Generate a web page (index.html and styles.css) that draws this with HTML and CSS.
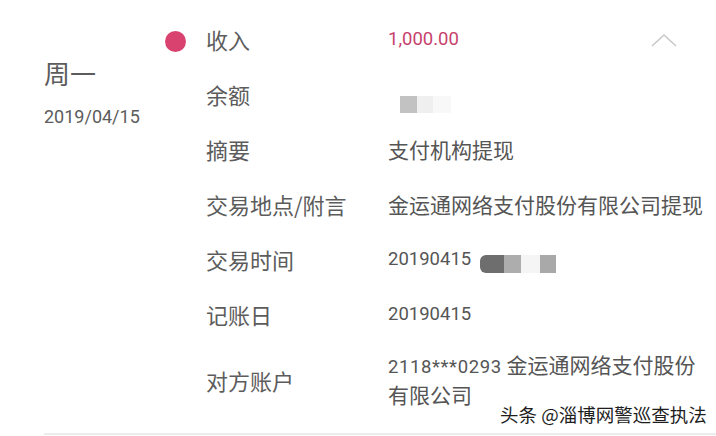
FILE: index.html
```html
<!DOCTYPE html>
<html lang="zh-CN">
<head>
<meta charset="utf-8">
<title>交易明细</title>
<link rel="stylesheet" href="styles.css">
</head>
<body>
<div class="page">
  <div class="entry">
    <div class="day">
      <div class="weekday">周一</div>
      <div class="date">2019/04/15</div>
    </div>
    <div class="details">
      <div class="mark"><span class="dot"></span></div>
      <div class="label">收入</div>
      <div class="value amount"><span class="num">1,000.00</span>
        <svg class="chevron" width="26" height="14" viewBox="0 0 26 14"><polyline points="1,13 13,2 25,13" fill="none" stroke="#c9c9c9" stroke-width="1.6"/></svg>
      </div>

      <div class="mark"></div>
      <div class="label">余额</div>
      <div class="value"><span class="redact r1"><i class="b b-mid"></i><i class="b b-faint"></i><i class="b b-ghost"></i></span></div>

      <div class="mark"></div>
      <div class="label">摘要</div>
      <div class="value">支付机构提现</div>

      <div class="mark"></div>
      <div class="label">交易地点/附言</div>
      <div class="value">金运通网络支付股份有限公司提现</div>

      <div class="mark"></div>
      <div class="label">交易时间</div>
      <div class="value"><span class="num">20190415</span><span class="redact r2"><i class="c c-dark"></i><i class="c c-mid"></i><i class="c c-faint"></i><i class="c c-mid2"></i></span></div>

      <div class="mark"></div>
      <div class="label">记账日</div>
      <div class="value"><span class="num">20190415</span></div>

      <div class="mark tall"></div>
      <div class="label tall">对方账户</div>
      <div class="value multi"><span class="num acct">2118***0293</span> 金运通网络支付股份有限公司</div>
    </div>
  </div>
  <div class="divider"></div>
  <div class="watermark">头条 @淄博网警巡查执法</div>
</div>
</body>
</html>
```

FILE: styles.css
```css
html, body {
  margin: 0;
  padding: 0;
  background: #ffffff;
}

body {
  font-family: "Noto Sans CJK SC", "Noto Sans", sans-serif;
  color: #5a5a5a;
}

.page {
  position: relative;
  width: 716px;
  height: 436px;
  overflow: hidden;
}

.entry {
  display: flex;
  padding-top: 11px;
}

.day {
  width: 120px;
  padding-left: 44px;
  padding-top: 45px;
}

.weekday {
  font-size: 26px;
  line-height: 34px;
  color: #5c5c5c;
}

.date {
  margin-top: 15px;
  font-family: Roboto, "Noto Sans", sans-serif;
  font-size: 18px;
  line-height: 24px;
  color: #5c5c5c;
}

.details {
  display: grid;
  grid-template-columns: 42px 182px 320px;
  grid-auto-rows: 55px;
}

.mark {
  display: flex;
  align-items: center;
}

.dot {
  display: block;
  width: 21px;
  height: 21px;
  margin-left: 1px;
  margin-top: 6px;
  border-radius: 50%;
  background: #d9416f;
}

.label {
  display: flex;
  align-items: center;
  font-size: 22px;
  color: #5c5c5c;
  white-space: nowrap;
}

.label.tall,
.mark.tall {
  grid-row: span 2;
  height: 77px;
}

.value {
  display: flex;
  align-items: center;
  font-size: 21px;
  color: #555555;
  white-space: nowrap;
}

.num {
  font-family: Roboto, "Noto Sans", sans-serif;
  font-size: 18.5px;
}

.acct {
  letter-spacing: 0.6px;
}

.amount {
  position: relative;
  color: #c7416d;
}

.chevron {
  position: absolute;
  left: 263px;
  top: 22px;
}

.multi {
  display: block;
  width: 316px;
  white-space: normal;
  line-height: 27px;
  padding-top: 10px;
  grid-row: span 2;
  align-self: start;
}

.redact {
  display: inline-flex;
}

.r1 {
  margin-left: 12px;
  margin-top: 22px;
}

.b {
  display: block;
  width: 17px;
  height: 17px;
}

.b-mid { background: #c2c2c2; }
.b-faint { width: 16px; background: #efefef; }
.b-ghost { width: 18px; background: #f8f8f8; }

.r2 {
  margin-left: 9px;
  margin-top: 10px;
}

.c {
  display: block;
  height: 18px;
}

.c-dark { width: 24px; background: #6e6e6e; border-radius: 6px 0 0 6px; }
.c-mid { width: 17px; background: #adadad; }
.c-faint { width: 19px; background: #f5f5f5; }
.c-mid2 { width: 16px; background: #a9a9a9; }

.divider {
  position: absolute;
  left: 44px;
  right: 0;
  top: 433px;
  height: 2px;
  background: #ececec;
}

.watermark {
  position: absolute;
  left: 500px;
  top: 400px;
  font-size: 18.5px;
  line-height: 28px;
  color: #1e1e1e;
  text-shadow: 1px 0 0 #fff, -1px 0 0 #fff, 0 1px 0 #fff, 0 -1px 0 #fff;
  white-space: nowrap;
}
```
